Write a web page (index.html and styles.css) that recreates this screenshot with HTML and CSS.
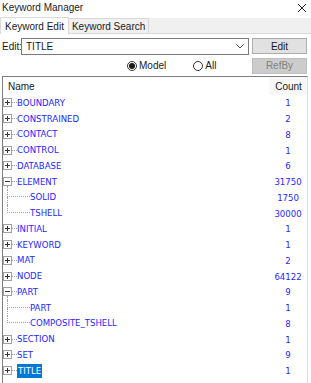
FILE: index.html
```html
<!DOCTYPE html>
<html lang="en">
<head>
    <meta charset="UTF-8">
    <meta name="viewport" content="width=device-width, initial-scale=1.0">
    <title>Keyword Manager</title>
    <link rel="stylesheet" href="styles.css">
</head>
<body>
    <div class="titlebar">
        <span>Keyword Manager</span>
        <svg class="close" width="10" height="10" viewBox="0 0 10 10"><path d="M1 1 L9 9 M9 1 L1 9" stroke="#222" stroke-width="1" fill="none"/></svg>
    </div>

    <div class="tabs">
        <div class="tab active">Keyword Edit</div>
        <div class="tab">Keyword Search</div>
        <div class="tab-fill"></div>
    </div>

    <div class="edit-row">
        <label for="kw" class="edit-label">Edit:</label>
        <div class="combo">
            <span class="combo-text">TITLE</span>
            <svg class="chevron" width="8" height="5" viewBox="0 0 8 5"><path d="M0.5 0.5 L4 4 L7.5 0.5" stroke="#555" stroke-width="1" fill="none"/></svg>
        </div>
        <button class="btn">Edit</button>
    </div>

    <div class="radio-row">
        <span class="radio checked"></span><span class="radio-label">Model</span>
        <span class="radio all"></span><span class="radio-label">All</span>
        <button class="btn disabled">RefBy</button>
    </div>

    <div class="list">
        <div class="list-head">
            <span class="col-name">Name</span>
            <span class="col-count">Count</span>
        </div>

        <div class="row"><span class="knob"><span class="box plus"></span></span><span class="dash"></span><span class="label">BOUNDARY</span><span class="count">1</span></div>
        <div class="row"><span class="knob"><span class="box plus"></span></span><span class="dash"></span><span class="label">CONSTRAINED</span><span class="count">2</span></div>
        <div class="row"><span class="knob"><span class="box plus"></span></span><span class="dash"></span><span class="label">CONTACT</span><span class="count">8</span></div>
        <div class="row"><span class="knob"><span class="box plus"></span></span><span class="dash"></span><span class="label">CONTROL</span><span class="count">1</span></div>
        <div class="row"><span class="knob"><span class="box plus"></span></span><span class="dash"></span><span class="label">DATABASE</span><span class="count">6</span></div>
        <div class="row"><span class="knob open"><span class="box"></span><span class="tail"></span></span><span class="dash"></span><span class="label">ELEMENT</span><span class="count">31750</span></div>
        <div class="row child"><span class="branch"><span class="up"></span><span class="down"></span></span><span class="label">SOLID</span><span class="count">1750</span></div>
        <div class="row child"><span class="branch last"><span class="up"></span><span class="down"></span></span><span class="label">TSHELL</span><span class="count">30000</span></div>
        <div class="row"><span class="knob"><span class="box plus"></span></span><span class="dash"></span><span class="label">INITIAL</span><span class="count">1</span></div>
        <div class="row"><span class="knob"><span class="box plus"></span></span><span class="dash"></span><span class="label">KEYWORD</span><span class="count">1</span></div>
        <div class="row"><span class="knob"><span class="box plus"></span></span><span class="dash"></span><span class="label">MAT</span><span class="count">2</span></div>
        <div class="row"><span class="knob"><span class="box plus"></span></span><span class="dash"></span><span class="label">NODE</span><span class="count">64122</span></div>
        <div class="row"><span class="knob open"><span class="box"></span><span class="tail"></span></span><span class="dash"></span><span class="label">PART</span><span class="count">9</span></div>
        <div class="row child"><span class="branch"><span class="up"></span><span class="down"></span></span><span class="label">PART</span><span class="count">1</span></div>
        <div class="row child"><span class="branch last"><span class="up"></span><span class="down"></span></span><span class="label">COMPOSITE_TSHELL</span><span class="count">8</span></div>
        <div class="row"><span class="knob"><span class="box plus"></span></span><span class="dash"></span><span class="label">SECTION</span><span class="count">1</span></div>
        <div class="row"><span class="knob"><span class="box plus"></span></span><span class="dash"></span><span class="label">SET</span><span class="count">9</span></div>
        <div class="row"><span class="knob"><span class="box plus"></span></span><span class="dash"></span><span class="label selected">TITLE</span><span class="count">1</span></div>
    </div>
</body>
</html>
```

FILE: styles.css
```css
* {
    box-sizing: border-box;
}

body {
    margin: 0;
    width: 311px;
    height: 383px;
    overflow: hidden;
    background: white;
    font-family: "Liberation Sans", Arial, sans-serif;
    font-size: 10px;
    color: #1a1a1a;
}

.titlebar {
    height: 17px;
    display: flex;
    align-items: center;
    justify-content: space-between;
    padding: 0 4px 2px 2px;
}

.tabs {
    height: 17px;
    display: flex;
    align-items: flex-end;
    border-bottom: 1px solid #d9d9d9;
}

.tab {
    height: 15px;
    padding: 0 3px;
    display: flex;
    align-items: center;
    background: #f0f0f0;
    border: 1px solid #d9d9d9;
    border-bottom: none;
    margin-left: -1px;
}

.tab.active {
    height: 17px;
    margin-left: 0;
    padding: 0 4px;
    background: white;
    margin-bottom: -1px;
    z-index: 1;
}

.tab-fill {
    flex: 1;
    height: 15px;
    background: #f0f0f0;
}

.edit-row {
    display: flex;
    align-items: center;
    height: 22px;
    padding: 2px 0 0 2px;
}

.edit-label {
    width: 19px;
}

.combo {
    width: 228px;
    height: 17px;
    border: 1px solid #7a7a7a;
    display: flex;
    align-items: center;
    justify-content: space-between;
    padding: 0 4px 0 4px;
}

.btn {
    margin-left: 3px;
    width: 55px;
    height: 16px;
    padding: 0;
    border: 1px solid #adadad;
    background: #e1e1e1;
    font-family: inherit;
    font-size: 10px;
    color: #1a1a1a;
}

.btn.disabled {
    border-color: #bfbfbf;
    background: #cccccc;
    color: #838383;
}

.radio-row {
    display: flex;
    align-items: center;
    height: 19px;
    padding-left: 127px;
}

.radio {
    width: 10px;
    height: 10px;
    border: 1px solid #333;
    border-radius: 50%;
    display: flex;
    align-items: center;
    justify-content: center;
}

.radio.checked::after {
    content: "";
    width: 6px;
    height: 6px;
    border-radius: 50%;
    background: #1a1a1a;
}

.radio.all {
    margin-left: 27px;
}

.radio-label {
    margin-left: 2px;
}

.radio-row .btn {
    margin-left: auto;
    margin-right: 4px;
}

.list {
    margin: 1px 0 0 2px;
    width: 306px;
    height: 320px;
    border-top: 1px solid #7f7f7f;
    border-left: 1px solid #7f7f7f;
    border-right: 1px solid #dcdcdc;
}

.list-head {
    height: 18px;
    display: flex;
    align-items: center;
}

.col-name {
    flex: 1;
    padding-left: 5px;
    align-self: stretch;
    display: flex;
    align-items: center;
}

.col-count {
    width: 38px;
    align-self: stretch;
    display: flex;
    align-items: center;
    justify-content: center;
    background: #f7f7f7;
    border-left: 1px solid #fbfbfb;
}

.row {
    height: 15.76px;
    display: flex;
    align-items: center;
    color: #2626ff;
    font-family: "DejaVu Sans Condensed", "Liberation Sans", sans-serif;
    font-size: 9.5px;
}

.knob {
    width: 9px;
    align-self: stretch;
    display: flex;
    flex-direction: column;
    align-items: center;
    justify-content: center;
}

.knob.open {
    justify-content: flex-start;
    padding-top: 3px;
}

.box {
    width: 9px;
    height: 9px;
    flex: none;
    border: 1px solid #a0a0a0;
    background: white;
    display: flex;
    align-items: center;
    justify-content: center;
}

.box::before {
    content: "";
    width: 5px;
    height: 1px;
    background: #333;
}

.box.plus {
    position: relative;
}

.box.plus::after {
    content: "";
    position: absolute;
    left: 3px;
    top: 1px;
    width: 1px;
    height: 5px;
    background: #333;
}

.tail {
    flex: 1;
    border-left: 1px dotted #a0a0a0;
}

.dash {
    width: 5px;
    border-top: 1px dotted #a0a0a0;
}

.branch {
    width: 23px;
    margin-left: 4px;
    align-self: stretch;
    display: flex;
    flex-direction: column;
}

.up {
    height: 50%;
    border-left: 1px dotted #a0a0a0;
    border-bottom: 1px dotted #a0a0a0;
}

.down {
    flex: 1;
    border-left: 1px dotted #a0a0a0;
}

.branch.last .down {
    border-left: none;
}

.label {
    flex: 1;
    line-height: 14px;
}

.label.selected {
    flex: none;
    background: #0078d7;
    color: white;
    padding: 0 1px;
    margin-right: auto;
}

.count {
    width: 38px;
    text-align: center;
}
```
